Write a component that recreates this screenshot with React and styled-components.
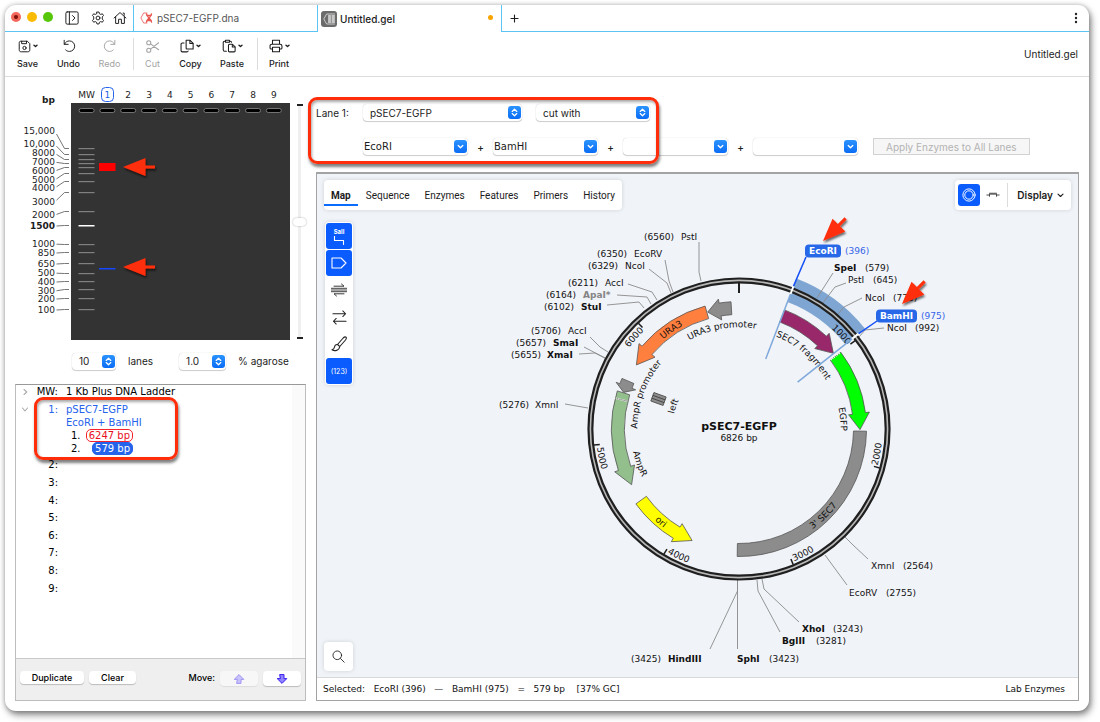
import React, { useState } from 'react'
import styled, { createGlobalStyle, css } from 'styled-components'

const ui = `Inter, "Liberation Sans", sans-serif`
const wide = `"DejaVu Sans", Verdana, sans-serif`
const blue = '#0a5cff'
const red = '#ff2d0a'

const GlobalStyle = createGlobalStyle`
* { box-sizing: border-box; }
body {
  margin: 0;
  background: #fff;
  font-family: ${ui};
  font-size: 10px;
  color: #1c1c1c;
}
button, input, select {
  font-family: inherit;
  font-size: inherit;
  color: inherit;
  margin: 0;
}
button {
  border: none;
  background: none;
  padding: 0;
}
svg { display: block; }
`

const Window = styled.div`
display: flex;
flex-direction: column;
height: calc(100vh - 16px);
margin: 5px 11px 11px 5px;
background: #fff;
border-radius: 11px;
box-shadow: 0 0 5px rgba(0, 0, 0, 0.25), 2px 4px 7px rgba(0, 0, 0, 0.45);
`

/* ---------- title bar ---------- */
const TabBar = styled.header`
display: flex;
height: 27px;
`
const WindowTools = styled.div`
display: flex;
align-items: center;
width: 128px;
padding-left: 6px;
border-bottom: 1px solid #5cc3f5;
`
const Lights = styled.div`
display: flex;
gap: 6px;
margin-right: 12px;
padding-bottom: 3px;
`
const Light = styled.button`
display: grid;
place-items: center;
width: 10px;
height: 10px;
border-radius: 50%;
background: ${p => p.$color};
&::after {
  content: "";
  width: 4px;
  height: 4px;
  border-radius: 50%;
  background: ${p => p.$dot || 'transparent'};
}
`
const BarIcons = styled.div`
display: flex;
align-items: center;
button:nth-child(2) { margin-left: 12px; }
button:nth-child(3) { margin-left: 8px; }
`
const DocTab = styled.button`
display: flex;
align-items: center;
gap: ${p => (p.$active ? 3 : 4)}px;
width: ${p => (p.$active ? 183 : 185)}px;
padding: 0 8px 0 ${p => (p.$active ? 3 : 6)}px;
color: ${p => (p.$active ? '#1c1c1c' : '#555')};
font-weight: ${p => (p.$active ? 500 : 400)};
border: 0 solid #5cc3f5;
border-width: ${p => (p.$active ? '0' : '0 1px 1px 1px')};
`
const Unsaved = styled.span`
width: 5px;
height: 5px;
margin: 0 0 2px auto;
border-radius: 50%;
background: #f7a400;
`
const TabRest = styled.div`
display: flex;
flex: 1;
align-items: center;
justify-content: space-between;
padding: 0 11px 0 8px;
border: 0 solid #5cc3f5;
border-width: 0 0 1px 1px;
`

/* ---------- toolbar ---------- */
const Toolbar = styled.div`
display: flex;
align-items: center;
height: 45px;
padding: 0 11px 0 2px;
border-bottom: 1px solid #dcdcdc;
`
const Tool = styled.button`
display: flex;
flex-direction: column;
align-items: center;
gap: 4px;
width: ${p => p.$w || 41}px;
font-size: 9px;
line-height: 12px;
font-weight: 500;
color: #1c1c1c;
&:disabled { color: #a3a3a3; font-weight: 400; }
`
const ToolIcon = styled.span`
display: flex;
align-items: center;
height: 15px;
gap: 2px;
`
const Divider = styled.span`
width: 1px;
height: 32px;
margin-left: 3px;
background: #dcdcdc;
`
const FileName = styled.span`
margin-left: auto;
`

/* ---------- body ---------- */
const Body = styled.div`
display: flex;
flex: 1;
min-height: 0;
padding-bottom: 10px;
`
const Left = styled.aside`
display: flex;
flex-direction: column;
width: 301px;
margin-right: 10px;
padding: 7px 0 0 10px;
`
const Right = styled.main`
display: flex;
flex: 1;
flex-direction: column;
min-width: 0;
margin-right: 10px;
`
const GelRow = styled.div`
display: flex;
padding-left: 5px;
svg { flex: none; }
svg text {
  font-family: ${wide};
  font-size: 9px;
  fill: #1c1c1c;
}
`
const SliderCol = styled.div`
display: flex;
flex-direction: column;
align-items: center;
width: 13px;
padding: 20px 0 5px;
margin-left: 1px;
`
const Tick = styled.span`
width: 6px;
height: 2px;
background: #222;
`
const Range = styled.input`
flex: 1;
width: 13px;
margin: 0;
appearance: none;
writing-mode: vertical-lr;
background: linear-gradient(#efefef, #efefef) center / 3px 100% no-repeat;
&::-webkit-slider-thumb {
  appearance: none;
  width: 13px;
  height: 8px;
  border-radius: 4px;
  background: #fff;
  box-shadow: 0 0 2px rgba(0, 0, 0, 0.35);
}
`
const GelControls = styled.div`
display: flex;
align-items: center;
padding-left: 57px;
margin-top: 8px;
height: 18px;
label:nth-of-type(2) { margin-left: 12px; }
`
const GelLabel = styled.label`
display: flex;
align-items: center;
gap: 12px;
margin-right: 14px;
`

/* ---------- fields ---------- */
const Field = styled.span`
display: grid;
align-items: center;
width: ${p => p.$w}px;
height: 17px;
border-radius: 4px;
background: #fff;
box-shadow: 0 0 1px rgba(0, 0, 0, 0.25), 0 1px 1px rgba(0, 0, 0, 0.18);
> * { grid-area: 1 / 1; }
select, input {
  appearance: none;
  width: 100%;
  height: 17px;
  padding: 0 18px 0 ${p => p.$pad || 7}px;
  border: none;
  background: none;
  outline: none;
}
input {
  font-family: ${wide};
}
`
const Knob = styled.span`
display: grid;
place-items: center;
justify-self: end;
width: 13px;
height: 13px;
margin-right: 1px;
border-radius: 3px;
background: linear-gradient(#2b93ff, #0a6cf5);
pointer-events: none;
`

const LaneForm = styled.form`
position: relative;
display: flex;
flex-direction: column;
gap: 17px;
padding: 27px 0 17px;
`
const LaneRow = styled.div`
display: flex;
align-items: center;
height: 17px;
padding-left: ${p => (p.$indent ? 47 : 0)}px;
> label { width: 47px; }
> span + span { margin-left: ${p => (p.$indent ? 0 : 14)}px; }
`
const Plus = styled.span`
width: 25px;
text-align: center;
font-weight: 500;
`
const ApplyBtn = styled.button`
height: 17px;
margin-left: 15px;
padding: 0 12px;
white-space: nowrap;
color: #b3b3b3;
background: #f6f6f6;
border: 1px solid #d2d2d2;
`
// hand-marked highlight around a group of controls
const Callout = styled.div`
position: absolute;
left: ${p => p.$x}px;
top: ${p => p.$y}px;
width: ${p => p.$w}px;
height: ${p => p.$h}px;
border: 3px solid ${red};
border-radius: 9px;
box-shadow: 1px 3px 3px rgba(0, 0, 0, 0.5), inset 1px 2px 3px rgba(0, 0, 0, 0.35);
pointer-events: none;
`

/* ---------- lane list ---------- */
const ListBox = styled.section`
position: relative;
display: flex;
flex: 1;
flex-direction: column;
margin-top: 14px;
border: 1px solid #bdbdbd;
border-top-color: #999;
font-family: ${wide};
font-size: 10px;
line-height: 13px;
color: #000;
`
const ListBody = styled.div`
flex: 1;
border-right: 13px solid #fafafa;
`
const LadderRow = styled.div`
display: grid;
grid-template-columns: 18px 24px 1fr;
margin-bottom: ${p => p.$mb || 0}px;
color: ${p => (p.$on ? '#2563eb' : '#000')};
> :nth-child(2) { text-align: right; }
> :nth-child(3) { padding-left: 8px; }
`
const Twist = styled.button`
display: grid;
place-items: center;
align-self: start;
height: 13px;
`
const Fragments = styled.ol`
display: grid;
justify-content: start;
margin: 0;
padding: 0;
list-style: none;
color: #000;
li {
  display: flex;
  justify-content: space-between;
  width: 67px;
  padding-left: 5px;
}
`
const Frag = styled.b`
height: 13px;
padding: 0 2px;
line-height: 11px;
font-weight: 400;
border: 1px solid ${p => (p.$fill ? '#2563eb' : '#f5222d')};
border-radius: 5px;
color: ${p => (p.$fill ? '#fff' : '#e8101c')};
background: ${p => (p.$fill ? '#2563eb' : '#fff')};
`
const EmptyLanes = styled.div`
display: grid;
grid-auto-rows: 1fr;
align-items: center;
width: 42px;
height: 141px;
text-align: right;
`
const ListFoot = styled.footer`
display: flex;
align-items: flex-start;
height: 42px;
padding: 12px 4px 0 4px;
border-top: 1px solid #c9c9c9;
background: #efefef;
font-family: ${ui};
font-size: 9px;
`
const PushBtn = styled.button`
width: ${p => p.$w}px;
height: 13px;
margin-right: 5px;
border-radius: 4px;
background: #fff;
font-weight: 500;
box-shadow: 0 1px 1px rgba(0, 0, 0, 0.22);
`
const MoveLabel = styled.span`
margin: 0 5px 0 auto;
line-height: 13px;
font-weight: 500;
`
const MoveBtn = styled.button`
display: grid;
place-items: center;
width: 38px;
height: 15px;
border-radius: 4px;
background: #fff;
box-shadow: 0 1px 1px rgba(0, 0, 0, 0.22);
& + & { margin-left: 5px; }
&:disabled { background: #f7f7f7; box-shadow: 0 1px 1px rgba(0, 0, 0, 0.08); }
&:disabled svg { opacity: 0.45; }
`

/* ---------- map ---------- */
const MapPanel = styled.section`
display: flex;
flex: 1;
flex-direction: column;
min-height: 0;
border: 1px solid #a3a3a3;
border-top-width: 2px;
`
const MapArea = styled.div`
display: grid;
flex: 1;
min-height: 0;
background: #f0f3f8;
> * {
  grid-area: 1 / 1;
  min-width: 0;
  min-height: 0;
}
`
const Plasmid = styled.svg`
width: 100%;
height: 100%;
text {
  font-family: ${wide};
  font-size: 9px;
  fill: #111;
}
`
const Overlay = styled.div`
display: flex;
flex-direction: column;
justify-content: space-between;
padding: 6px 7px;
`
const OverlayTop = styled.div`
display: flex;
align-items: flex-start;
justify-content: space-between;
`
const panel = css`
background: #fff;
border-radius: 4px;
box-shadow: 0 0 4px rgba(0, 0, 0, 0.14);
`
const ViewTabs = styled.nav`
display: flex;
gap: 1px;
height: 30px;
font-family: Roboto, ${ui};
${panel}
`
const ViewTab = styled.button`
padding: 4px 7px 0;
margin-bottom: 4px;
font-weight: ${p => (p.$on ? 700 : 400)};
box-shadow: ${p => (p.$on ? 'inset 0 -2px 0 #0a6cff' : 'none')};
`
const DisplayBox = styled.div`
display: flex;
align-items: center;
height: 30px;
padding: 0 7px 0 3px;
${panel}
`
const ShapeBtn = styled.button`
display: grid;
place-items: center;
width: 22px;
height: 22px;
margin-right: 2px;
border-radius: 3px;
background: ${p => (p.$on ? blue : 'none')};
`
const DisplayBtn = styled.button`
display: flex;
align-items: center;
gap: 4px;
height: 24px;
margin-left: 1px;
padding-left: 9px;
border-left: 1px solid #dcdcdc;
font-weight: 600;
`
const SideTools = styled.div`
display: flex;
flex-direction: column;
gap: 1px;
width: 28px;
margin: 12px 0 0 1px;
padding: 1px;
${panel}
`
const SideBtn = styled.button`
display: grid;
place-items: center;
width: 26px;
height: 26px;
border-radius: 3px;
font-size: 7px;
color: #fff;
background: ${p => (p.$on ? blue : 'none')};
`
const SiteIcon = styled.span`
display: grid;
justify-items: center;
gap: 1px;
font-size: 6px;
line-height: 7px;
font-weight: 700;
`
const SearchBtn = styled.button`
display: grid;
place-items: center;
width: 29px;
height: 29px;
${panel}
`
const StatusBar = styled.footer`
display: flex;
align-items: center;
justify-content: space-between;
height: 23px;
padding: 0 13px 0 6px;
font-family: ${wide};
font-size: 9px;
color: #111;
white-space: pre;
border-top: 1px solid #d8d8d8;
`

/* ---------- icons ---------- */
const Icon = ({ w = 16, h = w, vw = 16, vh = vw, children, ...rest }) => (
  <svg width={w} height={h} viewBox={`0 0 ${vw} ${vh}`} fill="none" stroke="currentColor"
    strokeWidth="1.1" strokeLinecap="round" strokeLinejoin="round" aria-hidden="true" {...rest}>
    {children}
  </svg>
)
const Caret = () => (
  <Icon w={5} h={4} vw={5} vh={4} strokeWidth="1.4"><path d="M1 1.2l1.5 1.3L4 1.2" /></Icon>
)
const SidebarIcon = () => (
  <Icon w={14}><rect x="1" y="1" width="14" height="14" rx="1.5" /><path d="M5 1v14M8.6 5.2L11.4 8l-2.8 2.8" /></Icon>
)
const GearIcon = () => (
  <Icon w={14}>
    <path d="M6.8 1.2h2.4l.4 1.9 1.5.8 1.9-.7 1.3 2-1.4 1.5v2.6l1.4 1.5-1.3 2-1.9-.7-1.5.8-.4 1.9H6.8l-.4-1.9-1.5-.8-1.9.7-1.3-2 1.4-1.5V6.7L1.7 5.2l1.3-2 1.9.7 1.5-.8z" />
    <circle cx="8" cy="8" r="2.2" />
  </Icon>
)
const HomeIcon = () => (
  <Icon w={14}><path d="M1.2 8L8 1.8 14.8 8M3 6.6v7.6h3.4V9.4h3.2v4.8H13V6.6M11.6 2.4h1.2V5" /></Icon>
)
const DnaFileIcon = () => (
  <Icon w={13} h={12} vw={13} vh={12} stroke="#e8574f" strokeWidth=".8">
    <path d="M7 1H3.6L.9 6l2.7 5H7" />
    <path d="M6.5 2c.5 3.5 4.500 4.500 5 8M11.5 2c-.5 3.500-4.500 4.500-5 8" strokeWidth="1.4" />
    <path d="M7 3.3h4M7.5 8.7H11" strokeWidth="1.2" />
  </Icon>
)
const GelFileIcon = () => (
  <Icon w={16} strokeWidth=".9">
    <rect width="16" height="16" rx="3" fill="#6b6b6b" stroke="none" />
    <path d="M13.5 3H5.6L2.8 8l2.8 5h7.9" stroke="#d6d6d6" />
    <path d="M7.5 5h2M7.5 7h2M7.5 9h2M7.5 11h2M11 5h2.4M11 7h2.4M11 9h2.4M11 11h2.4" stroke="#e6e6e6" strokeWidth="1.3" />
  </Icon>
)
const SaveIcon = () => (
  <Icon w={13} strokeWidth="1.2">
    <path d="M1.5 3.5c0-1.4.6-2 2-2h8l3 3V12c0 1.8-.7 2.5-2.5 2.5H4c-1.8 0-2.5-.7-2.5-2.5z" />
    <path d="M4.5 1.5v3h6v-3" />
    <circle cx="8" cy="9.8" r="2" />
  </Icon>
)
const UndoIcon = ({ flip }) => (
  <Icon w={14}>
    <g transform={flip ? 'translate(16 0) scale(-1 1)' : undefined}>
      <path d="M2.5 1.5v4.6h4.6" />
      <path d="M2.8 6C4 3.4 6.1 2.2 8.5 2.2c3.4 0 6 2.7 6 6s-2.6 6-6 6c-1.7 0-3.2-.6-4.3-1.7" />
    </g>
  </Icon>
)
const CutIcon = () => (
  <Icon w={15}><circle cx="4" cy="4" r="2.2" /><circle cx="4" cy="12" r="2.2" /><path d="M5.9 5.2l8.600 6.300M5.9 10.800L14.500 4" /></Icon>
)
const CopyIcon = () => (
  <Icon w={14} strokeWidth="1.2">
    <path d="M7 1.5h4.5L15 5v6.5H8.2c-.9 0-1.2-.3-1.2-1.2z" />
    <path d="M11.3 1.7v3.5h3.5" />
    <path d="M4.6 4.5H2.8c-1.1 0-1.6.5-1.6 1.5v7.2c0 1 .5 1.5 1.5 1.5h5c1 0 1.5-.4 1.6-1" />
  </Icon>
)
const PasteIcon = () => (
  <Icon w={14} strokeWidth="1.2">
    <path d="M3.5 2.5H3c-1 0-1.6.6-1.6 1.6v8.3C1.4 13.4 2 14 3 14h2M4 1.5h4.5v2.2H4zM9 2.5h.6c.9 0 1.3.5 1.3 1.3" />
    <path d="M8.6 6H12l3 3v4.6c0 .7-.3 1.1-1.1 1.1H8.6c-.8 0-1.2-.4-1.2-1.1V7.2c0-.8.4-1.2 1.2-1.2z" />
    <path d="M11.8 6.2v3h3" />
  </Icon>
)
const PrintIcon = () => (
  <Icon w={14} strokeWidth="1.2">
    <path d="M4 6V1.5h8V6M4 11.5H2.5c-.8 0-1.3-.5-1.3-1.3V8c0-1.2.8-2 2-2h9.6c1.2 0 2 .8 2 2v2.2c0 .8-.5 1.3-1.3 1.3H12" />
    <path d="M4 9.5h8v5H4z" />
  </Icon>
)
const UpDown = () => (
  <Icon w={9} vw={9} stroke="#fff" strokeWidth="1.3"><path d="M2.2 3.4l2.3-2.1 2.3 2.1M2.2 5.6l2.3 2.1 2.3-2.1" /></Icon>
)
const DownMark = () => (
  <Icon w={9} vw={9} stroke="#fff" strokeWidth="1.4"><path d="M2.2 3.6l2.3 2.1 2.3-2.1" /></Icon>
)
const MoveArrow = ({ down }) => (
  <Icon w={12} h={10} vw={12} vh={10} stroke="#3a1cf0" strokeWidth="1">
    <path d={down ? 'M4 .6h4v4h2.8L6 9.4 1.2 4.6H4z' : 'M4 9.4h4v-4h2.8L6 .6 1.2 5.4H4z'} fill="#8f86ff" />
  </Icon>
)

/* ---------- gel ---------- */
// size, label y, band y
const ladder = [
  ['15,000', 131, 149], ['10,000', 144, 155], ['8000', 153, 160], ['7000', 162, 164],
  ['6000', 171, 168], ['5000', 180, 174], ['4000', 188, 182], ['3000', 202, 193],
  ['2000', 215, 212], ['1500', 226, 226], ['1000', 244, 245], ['850', 253, 253],
  ['650', 264, 264], ['500', 273, 274], ['400', 282, 282], ['300', 291, 290],
  ['200', 299, 299], ['100', 310, 310],
]
const lanes = ['MW', '1', '2', '3', '4', '5', '6', '7', '8', '9']
const laneX = i => 86.6 + i * 20.8

const Pointer = ({ x, y, turn = 0 }) => (
  <g filter="url(#drop)">
    <path transform={`translate(${x} ${y}) rotate(${turn})`} d="M0 0l22.5-9v7.5H32v3h-9.5V9z" fill={red} />
  </g>
)
const DropFilter = () => (
  <filter id="drop" x="-30%" y="-30%" width="160%" height="180%">
    <feDropShadow dx="1" dy="2" stdDeviation="1.2" floodColor="#000" floodOpacity=".6" />
  </filter>
)

const Gel = () => (
  <svg width="272" height="260" viewBox="20 84 272 260" role="img" aria-label="Simulated agarose gel">
    <defs><DropFilter /></defs>
    <text x="55" y="103" textAnchor="end" fontWeight="700">bp</text>
    <rect x="71" y="103" width="219" height="237" fill="#333" />
    {lanes.map((l, i) => (
      <g key={l}>
        <text x={laneX(i)} y="98" textAnchor="middle" style={l === '1' ? { fill: '#2563eb' } : undefined}>{l}</text>
        <rect x={laneX(i) - 7.5} y="108.5" width="15" height="4" rx="2" fill="#000" stroke="#8a8a8a" strokeWidth=".8" />
      </g>
    ))}
    <rect x="101.5" y="87.5" width="12" height="14" rx="4" fill="none" stroke="#2563eb" />
    {ladder.map(([bp, y, band]) => {
      const bold = bp === '1500'
      const from = y + Math.max(-3, Math.min(3, (band - y) / 5))
      return (
        <g key={bp}>
          <text x="55" y={y + 3} textAnchor="end" fontWeight={bold ? 700 : 400}>{bp}</text>
          <path d={`M56.5 ${from}L64.5 ${band - 0.5}H69`} stroke="#666" strokeWidth=".9" fill="none" />
          <rect x="78.5" y={band - 1} width="16" height={bold ? 1.5 : 1.2} fill={bold ? '#fff' : '#808080'} />
        </g>
      )
    })}
    <rect x="99" y="163" width="16.5" height="8" fill="#f00" />
    <rect x="99" y="268" width="16.5" height="1.5" fill="#1447ff" />
    <Pointer x={123} y={167} />
    <Pointer x={123} y={267} />
  </svg>
)

/* ---------- plasmid map ---------- */
const CX = 739
const CY = 429
const polar = (r, deg) => {
  const a = (deg * Math.PI) / 180
  return `${(CX + r * Math.sin(a)).toFixed(1)} ${(CY - r * Math.cos(a)).toFixed(1)}`
}
const bpAngle = bp => (bp / 6826) * 360

// ring segment from one angle to another, with an arrow head starting at the angle head
const bandPath = (from, to, head, inner = 114.5, outer = 127.5) => {
  const cw = to > from ? 1 : 0
  const end = head === undefined ? to : head
  const tip = head === undefined
    ? `L${polar(inner, to)}`
    : `L${polar(131.5, end)}L${polar(121, to)}L${polar(110.5, end)}L${polar(inner, end)}`
  return `M${polar(inner, from)}L${polar(outer, from)}A${outer} ${outer} 0 0 ${cw} ${polar(outer, end)}${tip}A${inner} ${inner} 0 0 ${1 - cw} ${polar(inner, from)}Z`
}

const features = [
  { fill: '#8c8c8c', d: bandPath(91, 180.8) },
  { fill: '#8c8c8c', d: bandPath(356.4, 345, 351) },
  { fill: '#ff7f3f', d: bandPath(344.6, 302, 310.5) },
  { fill: '#8c8c8c', d: bandPath(293.4, 287.6, 290.8) },
  { fill: '#93bf8c', d: bandPath(287.4, 242.6, 251) },
  { fill: '#ffff00', d: bandPath(234, 202.8, 211) },
  { fill: '#99286b', d: bandPath(20.9, 51.3, 43.3) },
  { fill: '#00ff00', d: bandPath(53, 90.3, 82.6) },
]
// text, angle, radius, reads counter-clockwise
const arcLabels = [
  ['1000', 47.3, 140], ['2000', 100.2, 140, true], ['3000', 152.8, 140, true],
  ['4000', 205.4, 140, true], ['5000', 258, 140, true], ['6000', 311.2, 140],
  ['URA3', 325.7, 121], ['URA3 promoter', 350.2, 105], ['AmpR promoter', 290.4, 105],
  ['AmpR', 250.7, 105, true], ['ori', 220, 121, true], ["3' SEC7", 135.8, 121, true],
  ['SEC7 fragment', 41.2, 103], ['EGFP', 84.5, 105], ['left', 289.3, 70],
]
const ArcText = ({ id, text, angle, r, ccw }) => {
  const base = ccw ? r + 3.3 : r - 3.3
  const a = ccw ? angle + 50 : angle - 50
  const b = ccw ? angle - 50 : angle + 50
  return (
    <>
      <path id={id} d={`M${polar(base, a)}A${base} ${base} 0 0 ${ccw ? 0 : 1} ${polar(base, b)}`} fill="none" />
      <text textAnchor="middle"><textPath href={`#${id}`} startOffset="50%">{text}</textPath></text>
    </>
  )
}

// cut sites: name, position, name x, position x, y, leader line, style
const sites = [
  ['PstI', 6560, 681, 644, 240, '699,242 699,272 701,281'],
  ['EcoRV', 6350, 634, 597, 257, '665,260 669,281 673,292'],
  ['NcoI', 6329, 625, 588, 269, '649,269 667,283 671,293'],
  ['AccI', 6211, 605, 568, 286, '628,284 652,292 657,300'],
  ['ApaI*', 6164, 583, 546, 298, '617,295 647,297 651,304', 'faded'],
  ['StuI', 6102, 581, 544, 310, '607,305 639,302 644,308', 'bold'],
  ['AccI', 5706, 568, 531, 334, '590,337 600,347 608,352'],
  ['SmaI', 5657, 553, 516, 346, '584,347 605,358', 'bold'],
  ['XmaI', 5655, 547, 511, 358, '579,354 595,353 605,358', 'bold'],
  ['XmnI', 5276, 535, 499, 408, '565,404 588,408'],
  ['SpeI', 579, 834, 865, 271, '833,273 817,298', 'bold'],
  ['PstI', 645, 848, 873, 283, '846,283 835,287 822,304'],
  ['NcoI', 778, 865, 893, 301, '862,298 844,307 838,314'],
  ['NcoI', 992, 887, 915, 331, '884,328 865,330 859,337'],
  ['XmnI', 2564, 871, 903, 569, '845,537 853,545 868,559'],
  ['EcoRV', 2755, 849, 886, 596, '825,555 847,585'],
  ['XhoI', 3243, 802, 833, 632, '762,579 764,589 799,622', 'bold'],
  ['BglII', 3281, 782, 816, 644, '757,580 758,591 780,632', 'bold'],
  ['SphI', 3423, 737, 769, 662, '737.5,580 737.5,649', 'bold'],
  ['HindIII', 3425, 668, 631, 662, '737.5,580 737.5,591 710,649', 'bold'],
]
const picked = [
  { name: 'EcoRI', bp: 396, x: 805, y: 251, w: 36, to: '806,257' },
  { name: 'BamHI', bp: 975, x: 876, y: 316, w: 41, to: '877,321' },
]

const PlasmidMap = () => (
  <Plasmid viewBox="317 174 761 503" role="img" aria-label="pSEC7-EGFP plasmid map">
    <path d={bandPath(bpAngle(396), bpAngle(975), undefined, 136, 161)} fill="#7fa6d2" />
    {sites.map(([name, bp, nx, px, y, line, kind]) => (
      <g key={`${name}${bp}`}>
        <polyline points={line} fill="none" stroke="#8a8a8a" strokeWidth=".9" />
        <text x={nx} y={y} fontWeight={kind ? 700 : 400} style={kind === 'faded' ? { fill: '#858585' } : undefined}>{name}</text>
        <text x={px} y={y}>({bp})</text>
      </g>
    ))}
    <circle cx={CX} cy={CY} r="148.6" fill="none" stroke="#1f1f1f" strokeWidth="6" />
    <circle cx={CX} cy={CY} r="148.6" fill="none" stroke="#b8b8b8" strokeWidth="1.6" />
    <path d={`M${polar(146, 0)}L${polar(136, 0)}`} stroke="#1f1f1f" strokeWidth="2" />
    {[1000, 2000, 3000, 4000, 5000, 6000].map(bp => (
      <path key={bp} d={`M${polar(146, bpAngle(bp))}L${polar(140, bpAngle(bp))}`} stroke="#1f1f1f" strokeWidth="1.5" />
    ))}
    {features.map((f, i) => <path key={i} d={f.d} fill={f.fill} stroke="#555" strokeWidth=".8" />)}
    <path d={`M${polar(115, 284)}L${polar(127, 284)}`} stroke="#fff" strokeWidth="1.6" />
    <path d={`M${polar(115, 284)}L${polar(127, 284)}`} stroke="#333" strokeWidth="1" strokeDasharray="1 1" />
    <path d={`M${polar(115, 53)}L${polar(127, 53)}`} stroke="#fff" strokeWidth="1.6" strokeDasharray="1 1" />
    <g transform="translate(658.5 399) rotate(20)">
      <rect x="-6.5" y="-4.5" width="13" height="9" fill="#8c8c8c" stroke="#555" strokeWidth=".9" />
      <path d="M-6.5-1.5h13M-6.5 1.5h13" stroke="#444" strokeWidth=".9" />
    </g>
    {arcLabels.map(([text, angle, r, ccw], i) => (
      <ArcText key={text} id={`arc${i}`} text={text} angle={angle} r={r} ccw={ccw} />
    ))}
    {picked.map(s => {
      const a = bpAngle(s.bp)
      return (
        <g key={s.name}>
          <path d={`M${polar(145, a)}L${polar(75, a)}`} stroke="#7fa9dc" strokeWidth="1.5" />
          <path d={`M${polar(144.5, a)}L${polar(153, a)}`} stroke="#fff" strokeWidth="2" />
          <path d={`M${polar(153, a)}L${s.to}`} stroke="#1450f5" strokeWidth="1.5" />
          <rect x={s.x} y={s.y - 6.5} width={s.w} height="13" rx="4" fill="#2668e8" />
          <text x={s.x + s.w / 2} y={s.y + 3} textAnchor="middle" fontWeight="700" style={{ fill: '#fff' }}>{s.name}</text>
          <text x={s.x + s.w + 4} y={s.y + 3} style={{ fill: '#3565e8' }}>({s.bp})</text>
        </g>
      )
    })}
    <text x={CX} y="430" textAnchor="middle" fontWeight="700" style={{ fontSize: 11 }}>pSEC7-EGFP</text>
    <text x={CX} y="441" textAnchor="middle">6826 bp</text>
    <Pointer x={823} y={241} turn={-45} />
    <Pointer x={902} y={304} turn={-45} />
  </Plasmid>
)

const Pop = ({ w, pad, options, ...rest }) => (
  <Field $w={w} $pad={pad}>
    <select {...rest}>{options.map(o => <option key={o}>{o}</option>)}</select>
    <Knob><UpDown /></Knob>
  </Field>
)
const Combo = ({ label, value }) => (
  <Field $w={105} $pad={1}>
    <input type="text" aria-label={label} defaultValue={value} />
    <Knob><DownMark /></Knob>
  </Field>
)

const tools = [
  { name: 'Save', icon: <SaveIcon />, caret: true },
  { name: 'Undo', icon: <UndoIcon /> },
  { name: 'Redo', icon: <UndoIcon flip />, off: true, split: true },
  { name: 'Cut', icon: <CutIcon />, off: true, w: 37 },
  { name: 'Copy', icon: <CopyIcon />, caret: true, w: 39 },
  { name: 'Paste', icon: <PasteIcon />, caret: true, w: 44, split: true },
  { name: 'Print', icon: <PrintIcon />, caret: true, w: 42 },
]
const views = ['Map', 'Sequence', 'Enzymes', 'Features', 'Primers', 'History']
const enzymes = ['EcoRI', 'BamHI', '', '']

const App = () => {
  const [view, setView] = useState('Map')
  return (
    <>
      <GlobalStyle />
      <Window>
        <TabBar>
          <WindowTools>
            <Lights>
              <Light aria-label="Close" $color="#f2695c" $dot="#7a1009" />
              <Light aria-label="Minimize" $color="#fabb05" />
              <Light aria-label="Zoom" $color="#55c60a" />
            </Lights>
            <BarIcons>
              <button aria-label="Sidebar"><SidebarIcon /></button>
              <button aria-label="Settings"><GearIcon /></button>
              <button aria-label="Home"><HomeIcon /></button>
            </BarIcons>
          </WindowTools>
          <DocTab><DnaFileIcon />pSEC7-EGFP.dna</DocTab>
          <DocTab $active><GelFileIcon />Untitled.gel<Unsaved /></DocTab>
          <TabRest>
            <button aria-label="New tab"><Icon w={9} vw={9}><path d="M4.5 1v7M1 4.5h7" /></Icon></button>
            <button aria-label="More">
              <Icon w={4} h={12} vw={4} vh={12} fill="#222" stroke="none">
                <circle cx="2" cy="2" r="1.2" /><circle cx="2" cy="6" r="1.2" /><circle cx="2" cy="10" r="1.2" />
              </Icon>
            </button>
          </TabRest>
        </TabBar>
        <Toolbar>
          {tools.map(t => (
            <React.Fragment key={t.name}>
              <Tool $w={t.w} disabled={t.off}>
                <ToolIcon>{t.icon}{t.caret && <Caret />}</ToolIcon>
                {t.name}
              </Tool>
              {t.split && <Divider />}
            </React.Fragment>
          ))}
          <FileName>Untitled.gel</FileName>
        </Toolbar>
        <Body>
          <Left>
            <GelRow>
              <Gel />
              <SliderCol>
                <Tick />
                <Range type="range" aria-label="Run time" defaultValue="50" />
                <Tick />
              </SliderCol>
            </GelRow>
            <GelControls>
              <GelLabel><Pop w={44} options={['10']} />lanes</GelLabel>
              <GelLabel><Pop w={47} options={['1.0']} />% agarose</GelLabel>
            </GelControls>
            <ListBox>
              <ListBody>
                <LadderRow $mb={5}>
                  <Twist aria-label="Expand"><Icon w={5} h={8} vw={5} vh={8} stroke="#aaa"><path d="M1 1.5L3.8 4 1 6.5" /></Icon></Twist>
                  <span>MW:</span>
                  <span>1 Kb Plus DNA Ladder</span>
                </LadderRow>
                <LadderRow $on $mb={1}>
                  <Twist aria-label="Collapse"><Icon w={8} h={5} vw={8} vh={5} stroke="#aaa"><path d="M1.5 1L4 4l2.5-3" /></Icon></Twist>
                  <span>1:</span>
                  <div>
                    pSEC7-EGFP<br />EcoRI + BamHI
                    <Fragments>
                      <li>1.<Frag>6247 bp</Frag></li>
                      <li>2.<Frag $fill>579 bp</Frag></li>
                    </Fragments>
                  </div>
                </LadderRow>
                <EmptyLanes>
                  {lanes.slice(2).map(n => <span key={n}>{n}:</span>)}
                </EmptyLanes>
              </ListBody>
              <ListFoot>
                <PushBtn $w={64}>Duplicate</PushBtn>
                <PushBtn $w={47}>Clear</PushBtn>
                <MoveLabel>Move:</MoveLabel>
                <MoveBtn aria-label="Move up" disabled><MoveArrow /></MoveBtn>
                <MoveBtn aria-label="Move down"><MoveArrow down /></MoveBtn>
              </ListFoot>
              <Callout $x={18} $y={12} $w={144} $h={63} />
            </ListBox>
          </Left>
          <Right>
            <LaneForm>
              <LaneRow>
                <label htmlFor="template">Lane 1:</label>
                <Pop id="template" w={159} options={['pSEC7-EGFP']} />
                <Pop aria-label="Action" w={114} options={['cut with']} />
              </LaneRow>
              <LaneRow $indent>
                {enzymes.map((e, i) => (
                  <React.Fragment key={i}>
                    {i > 0 && <Plus>+</Plus>}
                    <Combo label={`Enzyme ${i + 1}`} value={e} />
                  </React.Fragment>
                ))}
                <ApplyBtn type="button" disabled>Apply Enzymes to All Lanes</ApplyBtn>
              </LaneRow>
              <Callout $x={-8} $y={20} $w={351} $h={67} />
            </LaneForm>
            <MapPanel>
              <MapArea>
                <PlasmidMap />
                <Overlay>
                  <div>
                    <OverlayTop>
                      <ViewTabs>
                        {views.map(v => <ViewTab key={v} $on={v === view} onClick={() => setView(v)}>{v}</ViewTab>)}
                      </ViewTabs>
                      <DisplayBox>
                        <ShapeBtn $on aria-label="Circular">
                          <Icon w={14} stroke="#fff"><circle cx="8" cy="8" r="7" /><circle cx="8" cy="8" r="4.8" /></Icon>
                        </ShapeBtn>
                        <ShapeBtn aria-label="Linear">
                          <Icon w={14} stroke="#444"><path d="M1 8h3M12 8h3M4 9.5V7h8v2.5M4 6h8" /></Icon>
                        </ShapeBtn>
                        <DisplayBtn>Display<Icon w={7} h={5} vw={7} vh={5}><path d="M1 1.2l2.5 2.3L6 1.2" /></Icon></DisplayBtn>
                      </DisplayBox>
                    </OverlayTop>
                    <SideTools>
                      <SideBtn $on aria-label="Sites">
                        <SiteIcon>SalI<Icon w={12} h={9} vw={12} vh={9} stroke="#fff"><path d="M1.5 0v4.5h9v4" /></Icon></SiteIcon>
                      </SideBtn>
                      <SideBtn $on aria-label="Features">
                        <Icon w={16} stroke="#fff"><path d="M1 3h9l5 5-5 5H1z" /></Icon>
                      </SideBtn>
                      <SideBtn aria-label="Primers">
                        <Icon w={16} stroke="#222" strokeWidth=".9">
                          <path d="M3 4.2h10L10.5 2M13 11.8H3L5.5 14M0 6.3h16M0 9.7h16" />
                          <path d="M0 8h16" stroke="#a6a6a6" strokeWidth="2.2" strokeLinecap="butt" />
                        </Icon>
                      </SideBtn>
                      <SideBtn aria-label="ORFs">
                        <Icon w={15} stroke="#222"><path d="M1 4h13.5M11.5 1l3 3-3 3M15 12H1.5M4.5 9l-3 3 3 3" /></Icon>
                      </SideBtn>
                      <SideBtn aria-label="Colors">
                        <Icon w={16} stroke="#222"><path d="M15 1.2c-1-.8-2 0-2.8.8L6.5 8.5l2.3 2L14.5 4c.7-.9 1.2-2 .5-2.8zM8.8 10.5l-2.3-2c-1.8-.2-2.7.9-3 2.5-.2 1.4-.9 2.3-2.5 2.8 2.5 1.4 7 1.2 7.8-3.3z" /></Icon>
                      </SideBtn>
                      <SideBtn $on aria-label="Numbering">(123)</SideBtn>
                    </SideTools>
                  </div>
                  <SearchBtn aria-label="Search">
                    <Icon w={13} stroke="#222"><circle cx="6.5" cy="6.5" r="5.3" /><path d="M10.5 10.5L15 15" /></Icon>
                  </SearchBtn>
                </Overlay>
              </MapArea>
              <StatusBar>
                <span>{'Selected:   EcoRI (396)   —   BamHI (975)   =   579 bp    [37% GC]'}</span>
                <span>Lab Enzymes</span>
              </StatusBar>
            </MapPanel>
          </Right>
        </Body>
      </Window>
    </>
  )
}

export default App
